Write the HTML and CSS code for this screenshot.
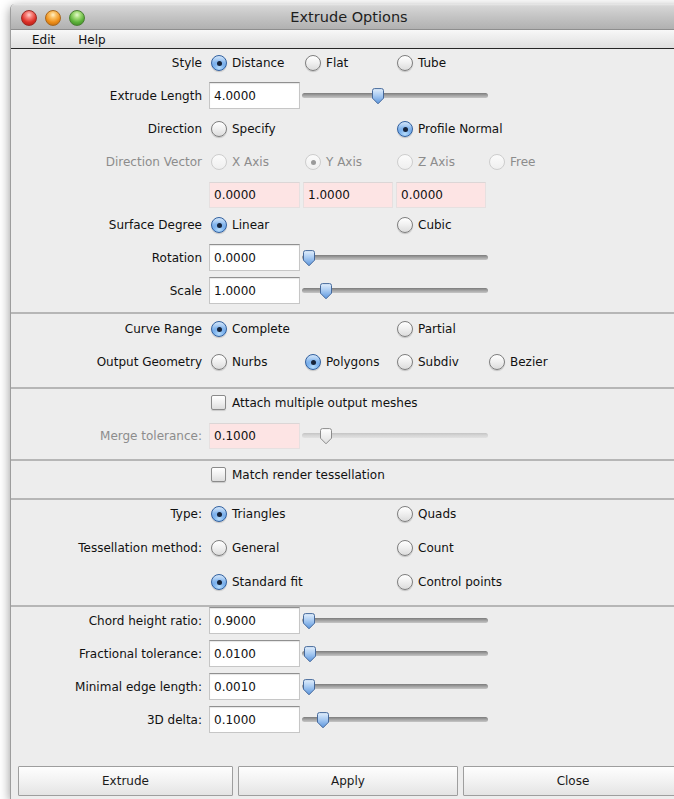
FILE: index.html
```html
<!DOCTYPE html>
<html lang="en">
<head>
<meta charset="utf-8">
<title>Extrude Options</title>
<link rel="stylesheet" href="styles.css">
</head>
<body>
<svg class="defs" width="0" height="0" aria-hidden="true">
  <defs>
    <linearGradient id="thumbFill" x1="0" y1="0" x2="0" y2="1">
      <stop offset="0" stop-color="#e3effc"/>
      <stop offset="0.45" stop-color="#a9cbf2"/>
      <stop offset="1" stop-color="#5a94dc"/>
    </linearGradient>
    <linearGradient id="thumbOff" x1="0" y1="0" x2="0" y2="1">
      <stop offset="0" stop-color="#ffffff"/>
      <stop offset="1" stop-color="#dedede"/>
    </linearGradient>
    <symbol id="thumb" viewBox="0 0 14 17">
      <path d="M1.5 2.6 Q1.5 0.6 3.5 0.6 H10.5 Q12.5 0.6 12.5 2.6 V10.2 L7 15.8 L1.5 10.2 Z"/>
    </symbol>
  </defs>
</svg>

<div class="window">
  <div class="titlebar">
    <div class="lights">
      <span class="light red"></span>
      <span class="light amber"></span>
      <span class="light green"></span>
    </div>
    <div class="title">Extrude Options</div>
    <div></div>
  </div>
  <div class="menubar">
    <span class="menu">Edit</span>
    <span class="menu">Help</span>
  </div>

  <div class="content">
    <section class="group g-first">
      <div class="row">
        <span class="lbl">Style</span>
        <span class="opt c2"><i class="radio on"></i>Distance</span>
        <span class="opt c3"><i class="radio"></i>Flat</span>
        <span class="opt c4"><i class="radio"></i>Tube</span>
      </div>
      <div class="row">
        <span class="lbl">Extrude Length</span>
        <span class="field c2">4.0000</span>
        <div class="slider"><svg class="thumb" style="left:69px"><use href="#thumb"/></svg></div>
      </div>
      <div class="row">
        <span class="lbl">Direction</span>
        <span class="opt c2"><i class="radio"></i>Specify</span>
        <span class="opt c4 wide"><i class="radio on"></i>Profile Normal</span>
      </div>
      <div class="row dim">
        <span class="lbl">Direction Vector</span>
        <span class="opt c2"><i class="radio"></i>X Axis</span>
        <span class="opt c3"><i class="radio on"></i>Y Axis</span>
        <span class="opt c4"><i class="radio"></i>Z Axis</span>
        <span class="opt c5"><i class="radio"></i>Free</span>
      </div>
      <div class="row vec">
        <span class="field pink c2">0.0000</span>
        <span class="field pink c3">1.0000</span>
        <span class="field pink c4 shift">0.0000</span>
      </div>
      <div class="row after-vec">
        <span class="lbl">Surface Degree</span>
        <span class="opt c2"><i class="radio on"></i>Linear</span>
        <span class="opt c4"><i class="radio"></i>Cubic</span>
      </div>
      <div class="row">
        <span class="lbl">Rotation</span>
        <span class="field c2">0.0000</span>
        <div class="slider"><svg class="thumb" style="left:0px"><use href="#thumb"/></svg></div>
      </div>
      <div class="row">
        <span class="lbl">Scale</span>
        <span class="field c2">1.0000</span>
        <div class="slider"><svg class="thumb" style="left:17px"><use href="#thumb"/></svg></div>
      </div>
    </section>

    <section class="group g-pad g-tall">
      <div class="row">
        <span class="lbl">Curve Range</span>
        <span class="opt c2"><i class="radio on"></i>Complete</span>
        <span class="opt c4"><i class="radio"></i>Partial</span>
      </div>
      <div class="row">
        <span class="lbl">Output Geometry</span>
        <span class="opt c2"><i class="radio"></i>Nurbs</span>
        <span class="opt c3"><i class="radio on"></i>Polygons</span>
        <span class="opt c4"><i class="radio"></i>Subdiv</span>
        <span class="opt c5"><i class="radio"></i>Bezier</span>
      </div>
    </section>

    <section class="group">
      <div class="row">
        <span class="opt c2 wide3"><i class="check"></i>Attach multiple output meshes</span>
      </div>
      <div class="row">
        <span class="lbl muted">Merge tolerance:</span>
        <span class="field pink c2">0.1000</span>
        <div class="slider off"><svg class="thumb" style="left:17px"><use href="#thumb"/></svg></div>
      </div>
    </section>

    <section class="group">
      <div class="row">
        <span class="opt c2 wide3"><i class="check"></i>Match render tessellation</span>
      </div>
    </section>

    <section class="group g-loose">
      <div class="row">
        <span class="lbl">Type:</span>
        <span class="opt c2"><i class="radio on"></i>Triangles</span>
        <span class="opt c4"><i class="radio"></i>Quads</span>
      </div>
      <div class="row">
        <span class="lbl">Tessellation method:</span>
        <span class="opt c2"><i class="radio"></i>General</span>
        <span class="opt c4"><i class="radio"></i>Count</span>
      </div>
      <div class="row">
        <span class="opt c2"><i class="radio on"></i>Standard fit</span>
        <span class="opt c4 wide"><i class="radio"></i>Control points</span>
      </div>
    </section>

    <section class="group g-last">
      <div class="row">
        <span class="lbl">Chord height ratio:</span>
        <span class="field c2">0.9000</span>
        <div class="slider"><svg class="thumb" style="left:0px"><use href="#thumb"/></svg></div>
      </div>
      <div class="row">
        <span class="lbl">Fractional tolerance:</span>
        <span class="field c2">0.0100</span>
        <div class="slider"><svg class="thumb" style="left:1px"><use href="#thumb"/></svg></div>
      </div>
      <div class="row">
        <span class="lbl">Minimal edge length:</span>
        <span class="field c2">0.0010</span>
        <div class="slider"><svg class="thumb" style="left:0px"><use href="#thumb"/></svg></div>
      </div>
      <div class="row">
        <span class="lbl">3D delta:</span>
        <span class="field c2">0.1000</span>
        <div class="slider"><svg class="thumb" style="left:14px"><use href="#thumb"/></svg></div>
      </div>
    </section>
  </div>

  <div class="buttons">
    <button class="btn b-first">Extrude</button>
    <button class="btn">Apply</button>
    <button class="btn">Close</button>
  </div>
</div>
</body>
</html>
```

FILE: styles.css
```css
html, body {
  margin: 0;
  padding: 0;
  background: #ffffff;
  overflow: hidden;
}

body {
  font-family: "DejaVu Sans", "Lucida Grande", sans-serif;
  font-size: 12px;
  color: #111;
}

.defs {
  position: absolute;
  width: 0;
  height: 0;
}

/* window frame */
.window {
  margin: 4px 0 0 10px;
  width: 676px;
  height: 795px;
  display: flex;
  flex-direction: column;
  background: #ededed;
  border-left: 1px solid #9d9d9d;
  box-shadow: 0 3px 11px rgba(0, 0, 0, 0.42);
  border-radius: 5px 5px 0 0;
}

/* title bar */
.titlebar {
  height: 25px;
  display: grid;
  grid-template-columns: 1fr auto 1fr;
  align-items: center;
  background: linear-gradient(#e9e9e9 0, #d6d6d6 2px, #c4c4c4 50%, #b1b1b1 100%);
  border-bottom: 1px solid #8e8e8e;
  border-radius: 5px 5px 0 0;
}

.lights {
  display: flex;
  gap: 8px;
  padding-left: 10px;
  padding-top: 2px;
}

.light {
  width: 16px;
  height: 16px;
  border-radius: 50%;
  box-sizing: border-box;
}

.light.red {
  background: radial-gradient(circle at 50% 28%, #ffd0cc 0, #f7817a 25%, #dc2f26 60%, #a81a14 100%);
  border: 1px solid #9c2a24;
}

.light.amber {
  background: radial-gradient(circle at 50% 28%, #fff0c8 0, #fbc267 25%, #ee8e18 60%, #b4620b 100%);
  border: 1px solid #a8671d;
}

.light.green {
  background: radial-gradient(circle at 50% 28%, #e4f8cf 0, #a8df7d 25%, #5cb23a 60%, #3a7d21 100%);
  border: 1px solid #4a7f33;
}

.title {
  font-size: 14.5px;
  color: #1e1e1e;
  padding-top: 1px;
}

/* menu bar */
.menubar {
  height: 19px;
  display: flex;
  align-items: center;
  gap: 23px;
  padding-left: 21px;
  padding-top: 1px;
  box-sizing: border-box;
  background: linear-gradient(#f8f8f8, #e9e9e9 60%, #dfdfdf);
  border-bottom: 1px solid #262626;
  font-size: 12px;
  color: #111;
}

/* form body */
.content {
  display: flex;
  flex-direction: column;
}

.group {
  display: flex;
  flex-direction: column;
  gap: 6px;
  padding: 0 0 10px;
  border-bottom: 2px solid #b6b6b6;
}

.g-first {
  padding-bottom: 8px;
}

.g-pad {
  padding-top: 1px;
}

.g-tall {
  padding-bottom: 12px;
}

.g-loose {
  gap: 7px;
}

.g-last {
  border-bottom: none;
}

.row {
  height: 27px;
  display: grid;
  grid-template-columns: 198px 94px 92px 92px 92px;
  align-items: center;
  white-space: nowrap;
}

.vec {
  align-items: end;
}

.after-vec {
  margin-top: -3px;
}

.lbl {
  grid-column: 1;
  text-align: right;
  padding-right: 7px;
}

.dim,
.muted {
  color: #8c8c8c;
}

.c2 { grid-column: 2; }
.c3 { grid-column: 3; }
.c4 { grid-column: 4; }
.c5 { grid-column: 5; }

.wide { grid-column-end: span 2; }
.wide3 { grid-column-end: span 3; }

/* radio & checkbox options */
.opt {
  display: flex;
  align-items: center;
  gap: 5px;
  padding-left: 2px;
}

.radio {
  flex: none;
  width: 16px;
  height: 16px;
  box-sizing: border-box;
  border-radius: 50%;
  border: 1px solid #7e7e7e;
  background: linear-gradient(#ffffff, #f1f1f1 45%, #dcdcdc);
  box-shadow: 0 1px 1px rgba(0, 0, 0, 0.18);
  display: flex;
  align-items: center;
  justify-content: center;
  margin-top: 1px;
}

.radio.on {
  border-color: #31609f;
  background: radial-gradient(circle at 50% 85%, #b6dcfb 0, #7fb4ee 35%, transparent 60%),
              linear-gradient(#d3e6fa, #84b5ec 50%, #4b87d6);
}

.radio.on::after {
  content: "";
  width: 5px;
  height: 5px;
  border-radius: 50%;
  background: #17243a;
}

.dim .radio {
  border-color: #cdcdcd;
  background: linear-gradient(#fbfbfb, #efefef);
  box-shadow: none;
}

.dim .radio.on::after {
  background: #9a9a9a;
}

.check {
  flex: none;
  width: 15px;
  height: 15px;
  box-sizing: border-box;
  border: 1px solid #8a8a8a;
  border-radius: 2px;
  background: linear-gradient(#ffffff, #f0f0f0 50%, #dddddd);
  box-shadow: 0 1px 1px rgba(0, 0, 0, 0.15);
  margin-right: 1px;
}

/* text fields */
.field {
  height: 27px;
  width: 91px;
  box-sizing: border-box;
  display: flex;
  align-items: center;
  padding-left: 4px;
  background: #ffffff;
  border: 1px solid #c6c6c6;
  border-top-color: #909090;
  box-shadow: inset 0 1px 1px rgba(0, 0, 0, 0.1);
  color: #111;
}

.field.pink {
  height: 26px;
  width: 91px;
  background: #fde4e4;
  border-color: #e6e0e0;
  border-top-color: #dcd6d6;
  box-shadow: none;
}

.c3.pink {
  width: 90px;
}

.field.shift {
  margin-left: 1px;
  width: 90px;
}

/* sliders */
.slider {
  grid-column: 3 / span 2;
  position: relative;
  width: 186px;
  height: 27px;
  margin-left: -1px;
}

.slider::before {
  content: "";
  position: absolute;
  left: 0;
  right: 0;
  top: 11px;
  height: 5px;
  border-radius: 3px;
  background: linear-gradient(#7c7c7c, #a3a3a3 50%, #c6c6c6);
}

.slider.off::before {
  background: linear-gradient(#c4c4c4, #d6d6d6 50%, #e2e2e2);
}

.thumb {
  position: absolute;
  top: 6px;
  width: 14px;
  height: 17px;
  fill: url(#thumbFill);
  stroke: #46699b;
  stroke-width: 1;
  stroke-linejoin: round;
}

.slider.off .thumb {
  fill: url(#thumbOff);
  stroke: #8c8c8c;
}

/* bottom buttons */
.buttons {
  margin-top: auto;
  display: flex;
  gap: 5px;
  padding: 0 0 3px 7px;
}

.btn {
  width: 220px;
  height: 30px;
  box-sizing: border-box;
  border: 1px solid #9e9e9e;
  border-radius: 1px;
  background: linear-gradient(#fefefe, #f2f2f2 50%, #e4e4e4);
  font-family: "DejaVu Sans", "Lucida Grande", sans-serif;
  font-size: 12px;
  color: #1a1a1a;
  padding: 0;
}

.b-first {
  width: 215px;
}
```
